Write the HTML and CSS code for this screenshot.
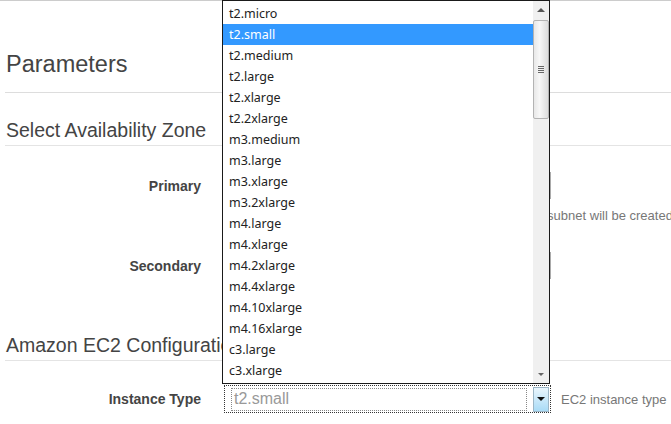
FILE: index.html
```html
<!DOCTYPE html>
<html lang="en">

<head>
  <meta charset="UTF-8">
  <meta name="viewport" content="width=device-width, initial-scale=1.0">
  <title>Parameters</title>

  <link rel="stylesheet" href="styles.css">
</head>

<body>
  <div class="page">
    <h2 class="title">Parameters</h2>

    <h3 class="section section-first">Select Availability Zone</h3>

    <div class="row row-first">
      <label class="label">Primary</label>
      <div class="select"></div>
    </div>
    <div class="hint-row">
      <span class="hint">The Availability Zone in which the primary public subnet will be created</span>
    </div>

    <div class="row row-second">
      <label class="label">Secondary</label>
      <div class="select"></div>
    </div>

    <h3 class="section section-ec2">Amazon EC2 Configuration</h3>

    <div class="row row-instance">
      <label class="label">Instance Type</label>
      <div class="select select-focus">
        <div class="select-value">t2.small</div>
        <div class="select-button"><span class="tri-down"></span></div>
      </div>
      <span class="help">EC2 instance type</span>
    </div>
  </div>

  <!-- open dropdown of the instance type select -->
  <div class="dropdown">
    <ul class="options">
      <li>t2.micro</li>
      <li class="selected">t2.small</li>
      <li>t2.medium</li>
      <li>t2.large</li>
      <li>t2.xlarge</li>
      <li>t2.2xlarge</li>
      <li>m3.medium</li>
      <li>m3.large</li>
      <li>m3.xlarge</li>
      <li>m3.2xlarge</li>
      <li>m4.large</li>
      <li>m4.xlarge</li>
      <li>m4.2xlarge</li>
      <li>m4.4xlarge</li>
      <li>m4.10xlarge</li>
      <li>m4.16xlarge</li>
      <li>c3.large</li>
      <li>c3.xlarge</li>
    </ul>
    <div class="scrollbar">
      <div class="scroll-btn"><span class="caret-up"></span></div>
      <div class="thumb"><span class="grip"></span></div>
      <div class="track"></div>
      <div class="scroll-btn scroll-btn-down"><span class="caret-down"></span></div>
    </div>
  </div>
</body>

</html>
```

FILE: styles.css
```css
body {
  font-family: 'Liberation Sans', Arial, sans-serif;
  background-color: #fff;
  margin: 0;
  border-top: 1px solid #ccc;
  color: #444;
}

.page {
  padding-left: 5px;
  overflow: hidden;
}

.title {
  font-size: 23.5px;
  font-weight: normal;
  line-height: 28px;
  margin: 0;
  padding: 49px 0 14px 1px;
  border-bottom: 1px solid #ddd;
}

.section {
  font-size: 19.5px;
  font-weight: normal;
  line-height: 24px;
  margin: 0;
  padding: 0 0 3px 1px;
  border-bottom: 1px solid #e4e4e4;
  white-space: nowrap;
}

.section-first {
  margin-top: 25px;
}

.section-ec2 {
  margin-top: 54px;
}

.row {
  display: grid;
  grid-template-columns: 196px 327px auto;
  column-gap: 23px;
  align-items: center;
}

.row-first {
  margin-top: 26px;
}

.row-second {
  margin-top: 28px;
}

.row-instance {
  margin-top: 24px;
  column-gap: 0;
  grid-template-columns: 219px 327px auto;
}

.label {
  font-size: 14px;
  font-weight: bold;
  text-align: right;
  color: #444;
}

.row-instance .label {
  padding-right: 23px;
}

.select {
  height: 27px;
  box-sizing: border-box;
  border: 1px solid #aaa;
  background-color: #fff;
}

.hint-row {
  padding-left: 262px;
  margin-top: 7px;
  white-space: nowrap;
}

.hint {
  font-size: 13px;
  line-height: 16px;
  color: #777;
}

.select-focus {
  height: 28px;
  border: 1px dotted #333;
  display: flex;
  align-items: center;
  padding: 1px 1px 1px 6px;
}

.select-value {
  flex: 1;
  height: 21px;
  border: 1px dotted #888;
  color: #999;
  font-size: 16px;
  line-height: 20px;
  padding-left: 2px;
  margin-right: 6px;
}

.select-button {
  width: 16px;
  height: 25px;
  box-sizing: border-box;
  border: 1px solid #9cb6c6;
  background: linear-gradient(#eaf6fd, #a9dbf6);
  display: flex;
  align-items: center;
  justify-content: center;
}

.tri-down {
  width: 0;
  height: 0;
  border-left: 4px solid transparent;
  border-right: 4px solid transparent;
  border-top: 4px solid #111;
}

.help {
  font-size: 13px;
  color: #777;
  padding-left: 10px;
  white-space: nowrap;
}

/* dropdown overlay */
.dropdown {
  position: absolute;
  left: 222px;
  top: 0;
  width: 328px;
  height: 384px;
  box-sizing: border-box;
  border: 1px solid #1a1a1a;
  background-color: #fff;
  display: flex;
}

.options {
  list-style: none;
  margin: 0;
  padding: 2px 0 0 0;
  flex: 1;
  font-family: 'Noto Sans', 'Open Sans', sans-serif;
  font-size: 12.5px;
  color: #222;
}

.options li {
  height: 21px;
  line-height: 21px;
  padding-left: 6px;
}

.options .selected {
  background-color: #3399ff;
  color: #fff;
}

.scrollbar {
  width: 16px;
  background-color: #f0f0f0;
  display: flex;
  flex-direction: column;
}

.scroll-btn {
  height: 17px;
  display: flex;
  align-items: center;
  justify-content: center;
}

.caret-up {
  width: 0;
  height: 0;
  border-left: 4px solid transparent;
  border-right: 4px solid transparent;
  border-bottom: 4px solid #555;
}

.caret-down {
  width: 0;
  height: 0;
  border-left: 3px solid transparent;
  border-right: 3px solid transparent;
  border-top: 3px solid #666;
}

.thumb {
  height: 99px;
  margin-top: 2px;
  box-sizing: border-box;
  border: 1px solid #b3b3b3;
  border-radius: 2px;
  background: linear-gradient(90deg, #e8e8e8, #f7f7f7 40%, #dcdcdc);
  display: flex;
  align-items: center;
  justify-content: center;
}

.grip {
  width: 6px;
  height: 7px;
  background: repeating-linear-gradient(#666 0 1px, transparent 1px 2px);
}

.track {
  flex: 1;
}
```
